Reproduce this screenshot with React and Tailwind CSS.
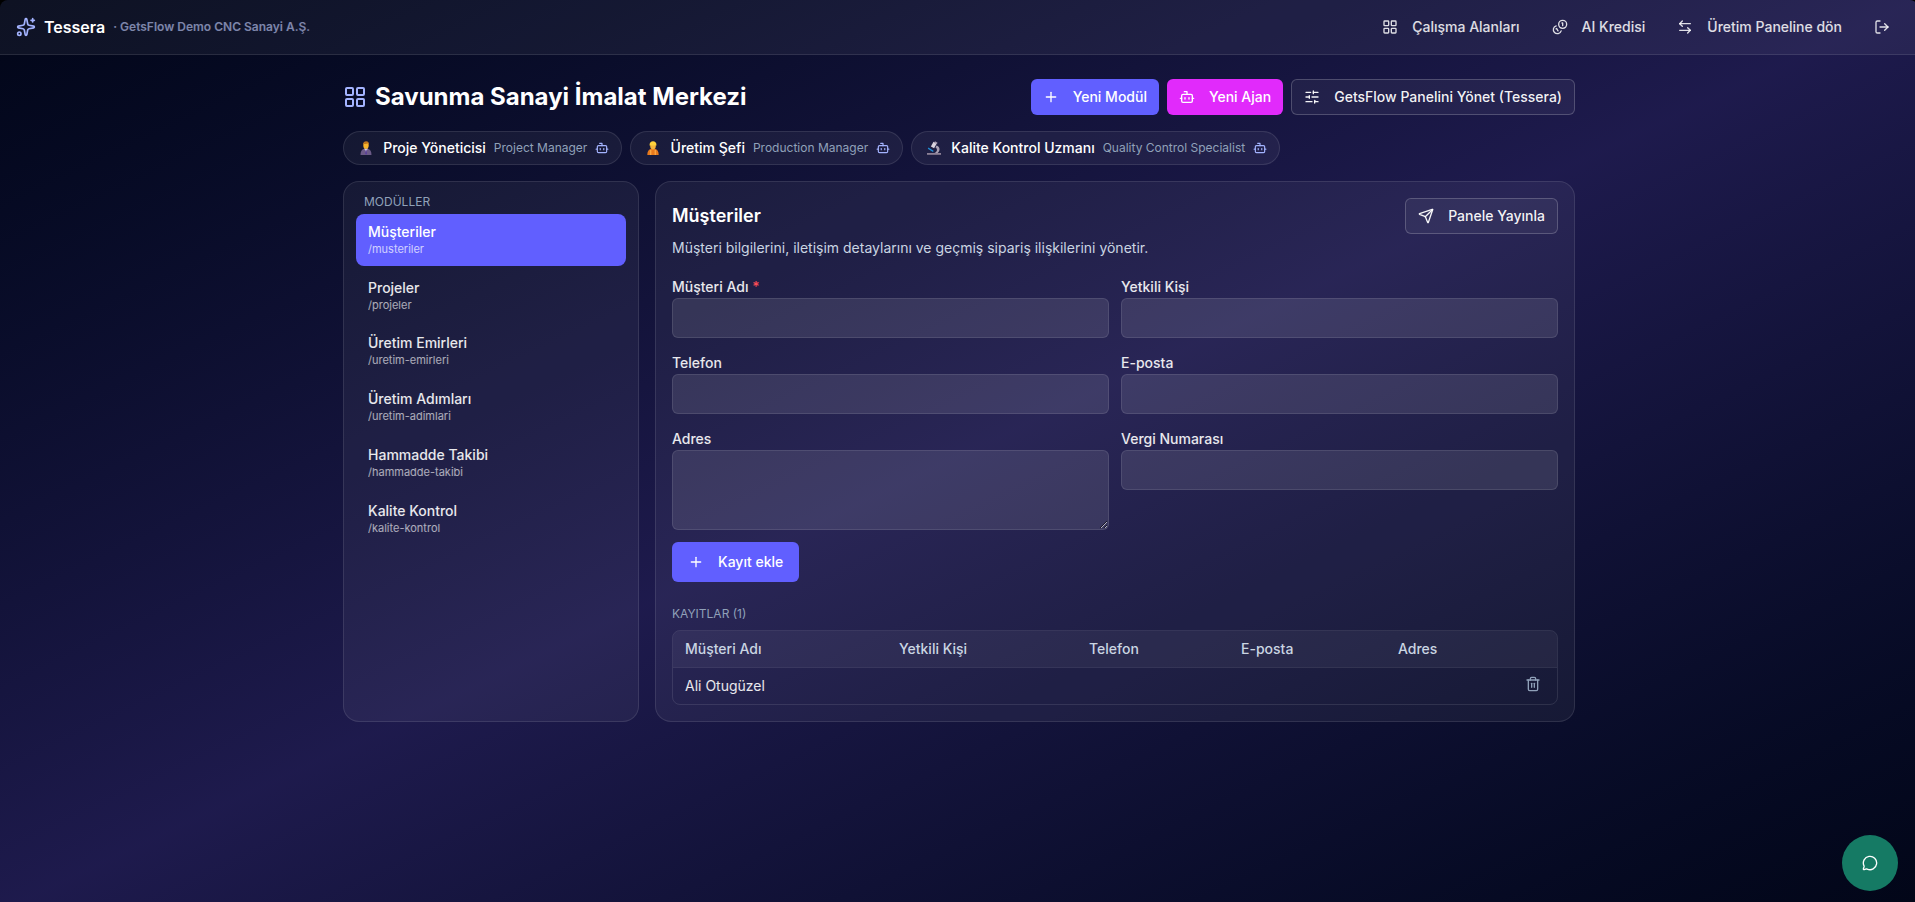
import {
  LayoutGrid,
  Sparkles,
  ArrowLeftRight,
  LogOut,
  Plus,
  Bot,
  SlidersHorizontal,
  Send,
  Trash2,
  MessageCircle,
} from "lucide-react";

const modules = [
  ["Müşteriler", "/musteriler"],
  ["Projeler", "/projeler"],
  ["Üretim Emirleri", "/uretim-emirleri"],
  ["Üretim Adımları", "/uretim-adimlari"],
  ["Hammadde Takibi", "/hammadde-takibi"],
  ["Kalite Kontrol", "/kalite-kontrol"],
];

function CoinsIcon() {
  return (
    <svg
      viewBox="0 0 24 24"
      className="size-4"
      fill="none"
      stroke="currentColor"
      strokeWidth="2"
      strokeLinecap="round"
      strokeLinejoin="round"
    >
      <path d="M13.744 17.736a6 6 0 1 1-7.480-7.480" />
      <path d="M15 6h1v4" />
      <path d="m6.134 14.768.866-.5 2 3.464" />
      <circle cx="16" cy="8" r="6" />
    </svg>
  );
}

function ManagerEmoji() {
  return (
    <svg viewBox="0 0 14 14" className="size-[14px]">
      <path d="M1.500 14c0-3.800 1.300-5.600 3.500-6.200h4c2.200.6 3.500 2.400 3.500 6.200z" fill="#6b5a86" />
      <path d="M5.200 7.500h3.600L7 11z" fill="#f4edf7" />
      <path d="M6.600 8.600h.9l.5 4-.9 1.200-.9-1.200z" fill="#5a3f9a" />
      <ellipse cx="7" cy="4.400" rx="2.700" ry="3.400" fill="#f9b52c" />
      <path d="M4.100 4.500C3.800 1.600 5.200.3 7.200.3s3.100 1.500 2.700 4.100C9.400 3.600 9 2.800 8.800 2.400 7.500 3 5.500 2.600 4.900 3z" fill="#c47a1e" />
    </svg>
  );
}

function WorkerEmoji() {
  return (
    <svg viewBox="0 0 14 14" className="size-[14px]">
      <path d="M1.300 14c0-3.800 1.500-5.600 3.700-6.200h4c2.200.6 3.700 2.400 3.700 6.200z" fill="#e8791c" />
      <path d="M4.200 9H5.300v5H4.200zM8.700 9h1.100v5H8.700z" fill="#ffb04a" />
      <ellipse cx="7" cy="5" rx="2.800" ry="3.400" fill="#f5b53c" />
      <path d="M3.500 4.500C3.500 1.600 5 .3 7 .3s3.500 1.300 3.500 4.200z" fill="#ffd23c" />
    </svg>
  );
}

function MicroscopeEmoji() {
  return (
    <svg viewBox="0 0 14 14" className="size-[14px]">
      <path d="M0 12h14v1.800H0z" fill="#8c8096" />
      <path d="M9.500 4.500c3.600 1 4 5 1.200 7.500H7.500c3-1.500 3.300-4 1-5.500z" fill="#a9a0b3" />
      <path d="m6.500.8 3.200 1.800-2.600 4.600-3.200-1.800z" fill="#d9d3de" />
      <path d="m8 .2 2.600 1.500-.8 1.500L7.200 1.700z" fill="#a79db0" />
      <path d="m1.400 6.600 5.200 3.200-.6 1.200L.8 7.800z" fill="#1f8fd6" />
    </svg>
  );
}

const agents = [
  ["Proje Yöneticisi", "Project Manager", ManagerEmoji],
  ["Üretim Şefi", "Production Manager", WorkerEmoji],
  ["Kalite Kontrol Uzmanı", "Quality Control Specialist", MicroscopeEmoji],
];

const fieldClass =
  "block w-full rounded-md border border-white/10 bg-white/10 outline-none";

function Field({ label, required, area }) {
  return (
    <div>
      <label className="text-sm font-medium text-white/90">
        {label}
        {required && <span className="text-[#fb4c56]"> *</span>}
      </label>
      {area ? (
        <textarea className={`${fieldClass} h-20`} />
      ) : (
        <input className={`${fieldClass} h-10`} />
      )}
    </div>
  );
}

function NavItem({ icon: Icon, children }) {
  return (
    <button className="flex h-9 items-center gap-3.5 px-3 text-sm font-medium text-white/85">
      <Icon size={16} />
      {children}
    </button>
  );
}

function OutlineButton({ icon: Icon, children }) {
  return (
    <button className="flex h-9 items-center gap-3.5 rounded-md border border-white/20 bg-white/5 px-3 text-sm font-medium text-white/95">
      <Icon size={16} />
      {children}
    </button>
  );
}

export default function App() {
  return (
    <div className="h-[902px] overflow-hidden bg-black font-['Inter',sans-serif]">
      <div className="relative h-[911px] w-[1918px] rounded-t-lg bg-gradient-to-br from-slate-950 via-indigo-950 to-slate-950 text-white">
        <header className="flex h-[55px] items-center justify-between rounded-t-lg border-b border-white/10 bg-white/5 px-4">
          <div className="flex items-center gap-2">
            <Sparkles size={20} className="text-indigo-300" />
            <span className="font-semibold">Tessera</span>
            <span className="text-xs font-semibold text-indigo-200/60">
              · GetsFlow Demo CNC Sanayi A.Ş.
            </span>
          </div>
          <nav className="flex items-center gap-2">
            <NavItem icon={LayoutGrid}>Çalışma Alanları</NavItem>
            <NavItem icon={CoinsIcon}>AI Kredisi</NavItem>
            <NavItem icon={ArrowLeftRight}>Üretim Paneline dön</NavItem>
            <NavItem icon={LogOut} />
          </nav>
        </header>

        <main className="mx-auto flex max-w-7xl flex-col gap-4 px-6 pt-6">
          <div className="flex items-center justify-between">
            <h1 className="flex items-center gap-2 text-2xl font-bold">
              <LayoutGrid size={24} className="text-indigo-300" />
              Savunma Sanayi İmalat Merkezi
            </h1>
            <div className="flex gap-2">
              <button className="flex h-9 items-center gap-3.5 rounded-md bg-indigo-500 px-3 text-sm font-medium">
                <Plus size={16} />
                Yeni Modül
              </button>
              <button className="flex h-9 items-center gap-3.5 rounded-md bg-fuchsia-500 px-3 text-sm font-medium">
                <Bot size={16} />
                Yeni Ajan
              </button>
              <OutlineButton icon={SlidersHorizontal}>
                GetsFlow Panelini Yönet (Tessera)
              </OutlineButton>
            </div>
          </div>

          <div className="flex gap-2">
            {agents.map(([name, role, Emoji]) => (
              <div
                key={name}
                className="flex h-[34px] items-center gap-2 rounded-full border border-white/10 bg-white/5 px-3"
              >
                <span className="flex w-[19.200px] justify-center">
                  <Emoji />
                </span>
                <span className="text-sm font-medium">{name}</span>
                <span className="text-xs text-slate-400">{role}</span>
                <Bot size={14} className="text-indigo-300" />
              </div>
            ))}
          </div>

          <div className="grid grid-cols-12 gap-4">
            <aside className="col-span-3 rounded-2xl border border-white/10 bg-white/5 p-3">
              <div className="mb-1 px-2 text-xs text-slate-400">MODÜLLER</div>
              <div className="flex flex-col gap-1">
                {modules.map(([name, slug], i) => (
                  <button
                    key={slug}
                    className={`rounded-lg px-3 py-2 text-left ${
                      i === 0 ? "bg-indigo-500 text-white" : "text-white/90"
                    }`}
                  >
                    <div className="text-sm font-medium">{name}</div>
                    <div className="text-[11px] leading-[1.42857] opacity-70">
                      {slug}
                    </div>
                  </button>
                ))}
              </div>
            </aside>

            <section className="col-span-9 rounded-2xl border border-white/10 bg-white/5 p-4">
              <div className="flex items-center justify-between">
                <h2 className="text-lg font-semibold">Müşteriler</h2>
                <OutlineButton icon={Send}>Panele Yayınla</OutlineButton>
              </div>
              <p className="mt-1 text-sm text-slate-300">
                Müşteri bilgilerini, iletişim detaylarını ve geçmiş sipariş
                ilişkilerini yönetir.
              </p>

              <div className="mt-4 grid grid-cols-2 gap-3">
                <Field label="Müşteri Adı" required />
                <Field label="Yetkili Kişi" />
                <Field label="Telefon" />
                <Field label="E-posta" />
                <Field label="Adres" area />
                <Field label="Vergi Numarası" />
                <div>
                  <button className="flex h-10 items-center gap-3.5 rounded-md bg-indigo-500 px-4 text-sm font-medium">
                    <Plus size={16} />
                    Kayıt ekle
                  </button>
                </div>
              </div>

              <div className="mt-6 mb-2 text-xs text-slate-400">KAYITLAR (1)</div>
              <div className="overflow-hidden rounded-lg border border-white/10 text-sm">
                <div className="grid h-9 grid-cols-[214px_190px_152px_157px_1fr] items-center bg-white/5 font-medium text-slate-300">
                  <span className="px-3">Müşteri Adı</span>
                  <span className="px-3">Yetkili Kişi</span>
                  <span className="px-3">Telefon</span>
                  <span className="px-3">E-posta</span>
                  <span className="px-3">Adres</span>
                </div>
                <div className="flex h-[37px] items-center justify-between border-t border-white/10 px-3 text-white/90">
                  <span>Ali Otugüzel</span>
                  <button className="px-1 pb-1 text-slate-400">
                    <Trash2 size={16} />
                  </button>
                </div>
              </div>
            </section>
          </div>
        </main>

        <button className="absolute right-5 bottom-5 flex size-14 items-center justify-center rounded-full bg-[#157a64]">
          <MessageCircle size={16} />
        </button>
      </div>
    </div>
  );
}
